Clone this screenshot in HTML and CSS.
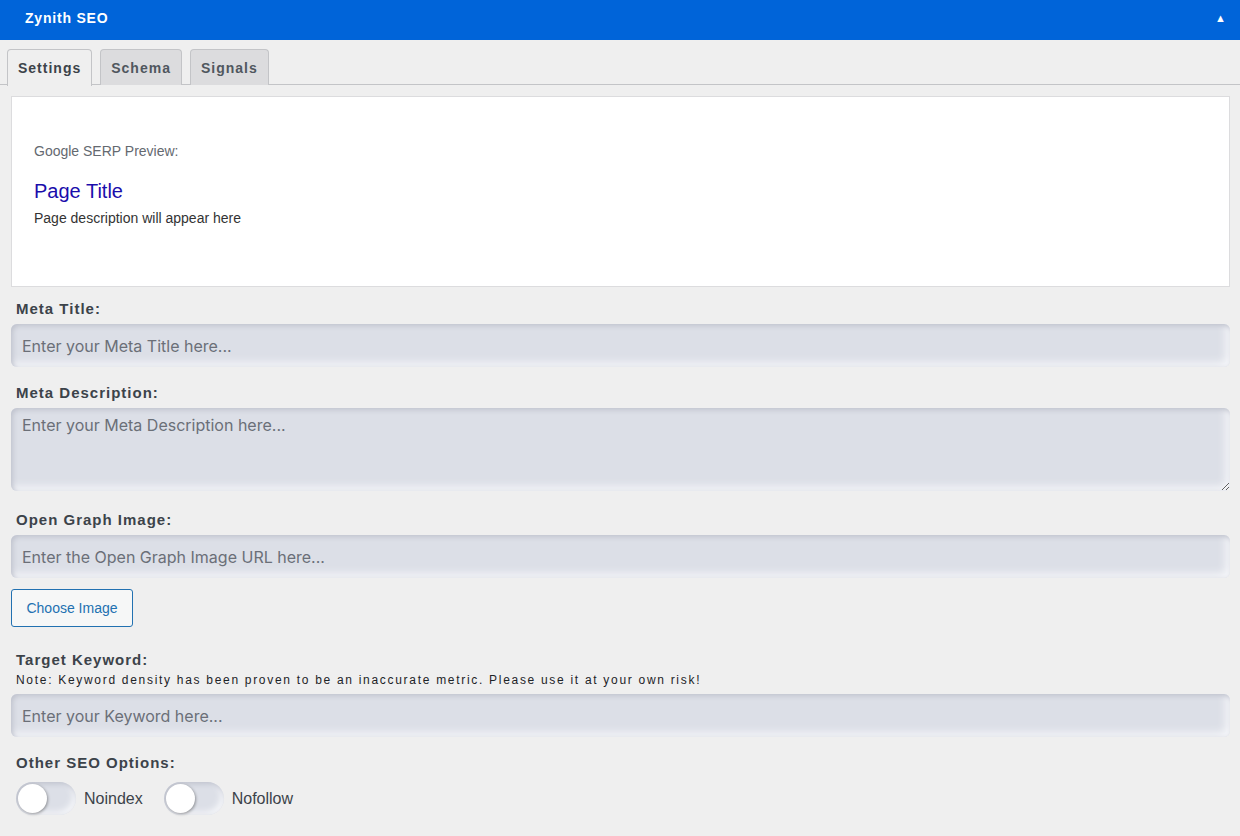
FILE: index.html
```html
<!DOCTYPE html>
<html>
<head>
<meta charset="utf-8">
<link rel="stylesheet" href="styles.css">
</head>
<body>
<header class="topbar">
  <span class="topbar-title">Zynith SEO</span>
  <span class="topbar-arrow">&#9650;</span>
</header>
<nav class="tabs">
  <div class="tab active">Settings</div>
  <div class="tab">Schema</div>
  <div class="tab">Signals</div>
</nav>
<main class="content">
  <section class="serp">
    <div class="serp-label">Google SERP Preview:</div>
    <div class="serp-title">Page Title</div>
    <div class="serp-desc">Page description will appear here</div>
  </section>

  <label class="field-label first">Meta Title:</label>
  <input class="field-input" type="text" placeholder="Enter your Meta Title here...">

  <label class="field-label">Meta Description:</label>
  <textarea class="field-input field-textarea" placeholder="Enter your Meta Description here..."></textarea>

  <label class="field-label og">Open Graph Image:</label>
  <input class="field-input" type="text" placeholder="Enter the Open Graph Image URL here...">
  <button class="choose-btn">Choose Image</button>

  <label class="field-label kw">Target Keyword:</label>
  <div class="note">Note: Keyword density has been proven to be an inaccurate metric. Please use it at your own risk!</div>
  <input class="field-input" type="text" placeholder="Enter your Keyword here...">

  <label class="field-label">Other SEO Options:</label>
  <div class="toggles">
    <div class="toggle-item"><span class="toggle"><span class="knob"></span></span><span class="toggle-text">Noindex</span></div>
    <div class="toggle-item"><span class="toggle"><span class="knob"></span></span><span class="toggle-text">Nofollow</span></div>
  </div>
</main>
</body>
</html>
```

FILE: styles.css
```css
* { box-sizing: border-box; }
html, body { margin: 0; padding: 0; }
body {
  background: #efefef;
  font-family: "Liberation Sans", Arial, sans-serif;
  width: 1240px;
  height: 836px;
  overflow: hidden;
}
.topbar {
  height: 40px;
  background: #0064d9;
  display: flex;
  align-items: center;
  justify-content: space-between;
  padding: 0 14px 0 25px;
}
.topbar-title {
  color: #fff;
  font-weight: bold;
  font-size: 14px;
  letter-spacing: 0.8px;
  margin-top: -4px;
}
.topbar-arrow {
  color: #fff;
  font-size: 11px;
  margin-top: -5px;
}
.tabs {
  display: flex;
  gap: 8px;
  padding: 49px 0 0 7px;
  border-bottom: 1px solid #c3c4c7;
  height: 85px;
  margin-top: -40px;
}
.tab {
  height: 36px;
  padding: 0 10px;
  display: flex;
  align-items: center;
  font-size: 14px;
  font-weight: bold;
  letter-spacing: 1px;
  color: #50575e;
  background: #dcdcde;
  border: 1px solid #c3c4c7;
  border-bottom: none;
  border-radius: 4px 4px 0 0;
}
.tab.active {
  background: #efefef;
  color: #3c434a;
  height: 37px;
  margin-bottom: -1px;
}
.content {
  padding: 11px 10px 0 11px;
  display: flex;
  flex-direction: column;
  align-items: flex-start;
}
.serp {
  width: 100%;
  height: 191px;
  background: #fff;
  border: 1px solid #dcdcde;
  padding: 46px 22px 0 22px;
}
.serp-label {
  font-size: 14px;
  color: #646970;
  line-height: 17px;
}
.serp-title {
  font-size: 20px;
  color: #1a0dab;
  line-height: 24px;
  margin-top: 19px;
}
.serp-desc {
  font-size: 14px;
  color: #333;
  line-height: 17px;
  margin-top: 7px;
}
.field-label {
  display: block;
  font-size: 15px;
  font-weight: bold;
  letter-spacing: 1px;
  color: #3c434a;
  line-height: 17px;
  margin: 17px 0 7px 5px;
}
.field-label.first { margin-top: 13px; }
.field-label.og { margin-top: 20px; }
.field-label.kw { margin-top: 24px; margin-bottom: 0; }
.field-input {
  width: 100%;
  height: 43px;
  border: none;
  border-radius: 6px;
  background: #dcdfe7;
  box-shadow: inset 2px 2px 5px #bfc2cd, inset -4px -4px 8px #f6f7fa;
  font-family: Inter, "Liberation Sans", Arial, sans-serif;
  font-size: 16px;
  color: #3c434a;
  padding: 0 11px;
  outline: none;
  margin: 0;
}
.field-input::placeholder { color: #6b6f78; }
.field-textarea {
  height: 83px;
  padding: 7px 11px;
  resize: vertical;
  display: block;
  line-height: 20px;
}
.choose-btn {
  margin-top: 11px;
  height: 38px;
  width: 122px;
  border: 1px solid #2271b1;
  border-radius: 3px;
  background: #f6f7f7;
  color: #2271b1;
  font-family: "Liberation Sans", Arial, sans-serif;
  font-size: 14px;
  padding: 0;
}
.note {
  font-size: 12px;
  letter-spacing: 1.7px;
  color: #1d2327;
  line-height: 15px;
  margin: 5px 0 6px 5px;
}
.toggles {
  display: flex;
  gap: 21px;
  padding-left: 5px;
  margin-top: 4px;
}
.toggle-item {
  display: flex;
  align-items: center;
  gap: 8px;
}
.toggle {
  width: 60px;
  height: 33px;
  border-radius: 17px;
  background: #dcdfe7;
  box-shadow: inset 2px 2px 5px #bfc2cd, inset -3px -3px 6px #f6f7fa;
  display: flex;
  align-items: center;
  padding-left: 2px;
}
.knob {
  width: 29px;
  height: 29px;
  border-radius: 50%;
  background: #fff;
  box-shadow: 1px 1px 3px rgba(0,0,0,0.35);
}
.toggle-text {
  font-size: 16px;
  color: #3c434a;
}
```
